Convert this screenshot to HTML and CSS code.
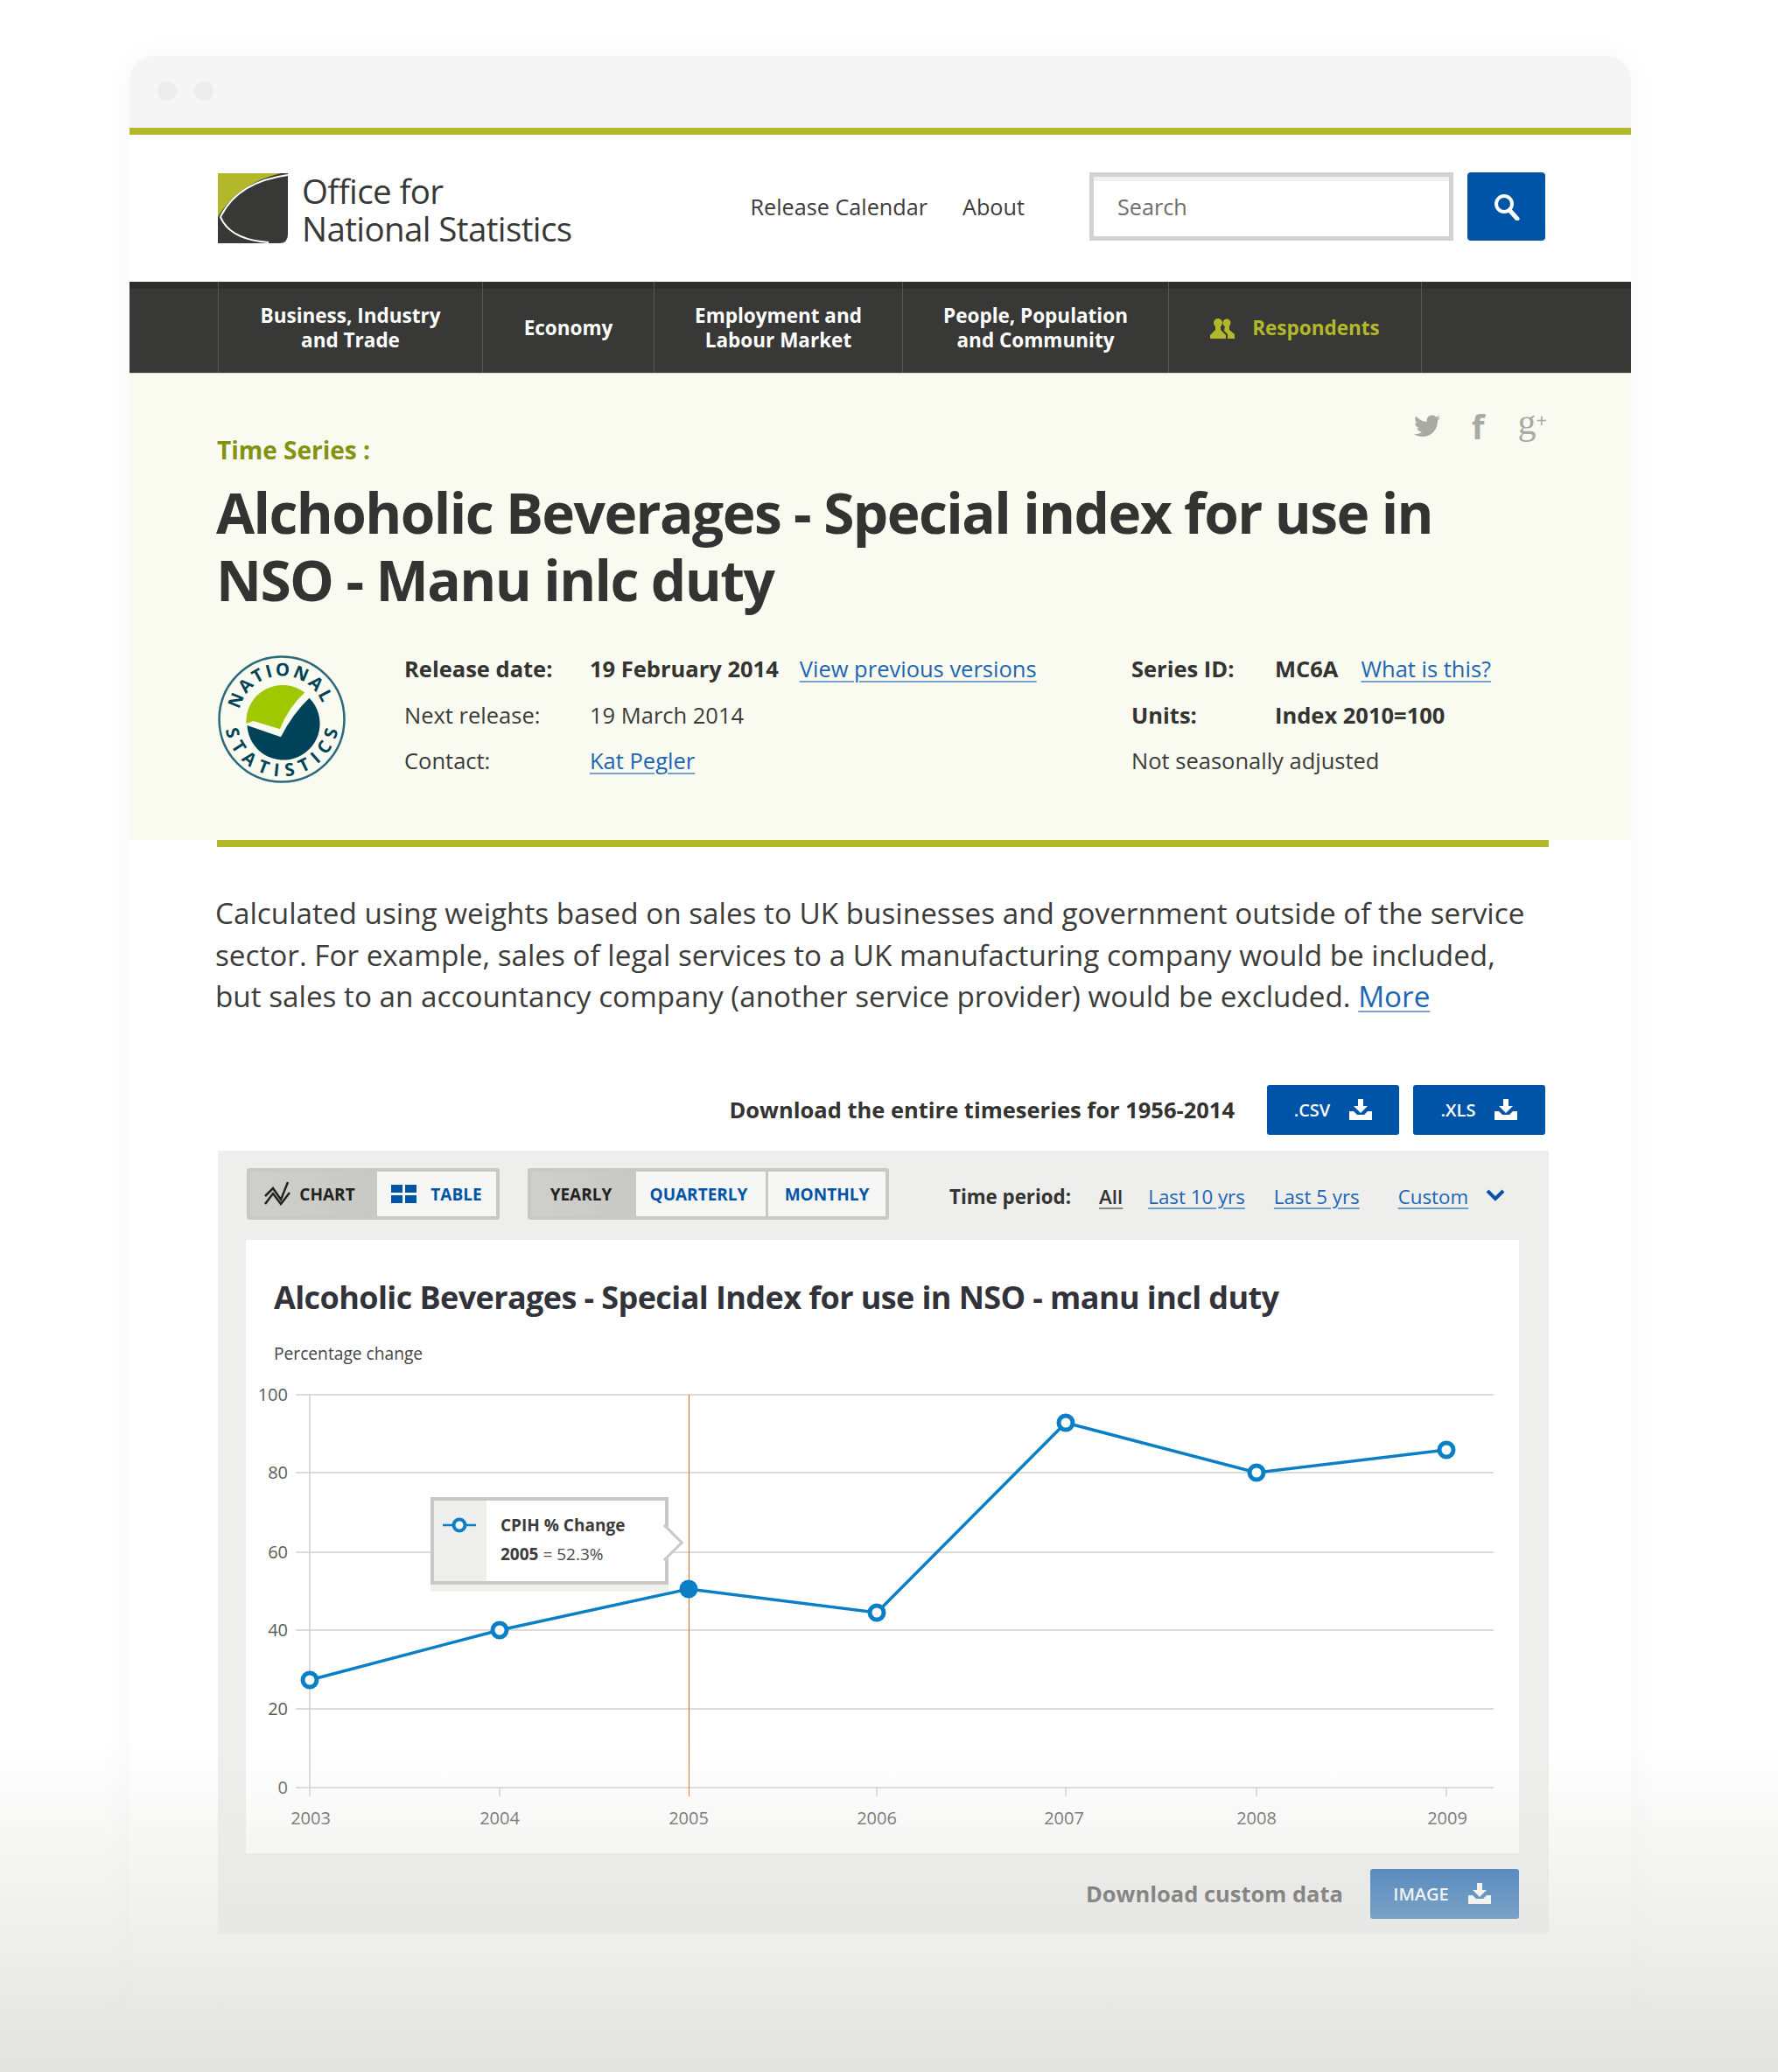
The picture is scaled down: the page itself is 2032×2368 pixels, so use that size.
FILE: index.html
```html
<!DOCTYPE html>
<html lang="en">

<head>
    <meta charset="UTF-8">
    <title>Alchoholic Beverages - Office for National Statistics</title>
    <link rel="stylesheet" href="styles.css">
</head>

<body>
    <div class="window">
        <div class="chrome">
            <span class="dot"></span>
            <span class="dot"></span>
        </div>

        <header class="masthead">
            <a class="brand" href="#">
                <svg class="brand-mark" viewBox="0 0 80 80" width="80" height="80">
                    <path d="M0 0H80V70Q80 80 70 80H0Z" fill="#383836" />
                    <path d="M0 0H72Q22 12 0 50Z" fill="#b3b82b" />
                    <path d="M80 2Q22 10 3 50Q14 76 58 79" fill="none" stroke="#fff" stroke-width="2" />
                </svg>
                <span class="brand-name">Office for<br>National Statistics</span>
            </a>
            <nav class="top-links">
                <a href="#">Release Calendar</a>
                <a href="#">About</a>
            </nav>
            <div class="search">
                <div class="search-box">Search</div>
                <button class="search-btn">
                    <svg viewBox="0 0 32 32" width="32" height="32">
                        <circle cx="13" cy="13" r="9" fill="none" stroke="#fff" stroke-width="4" />
                        <path d="M19 20L28 30" stroke="#fff" stroke-width="5" stroke-linecap="round" />
                    </svg>
                </button>
            </div>
        </header>

        <nav class="main-nav">
            <a class="nav-item nav-business" href="#">Business, Industry<br>and Trade</a>
            <a class="nav-item nav-economy" href="#">Economy</a>
            <a class="nav-item nav-employment" href="#">Employment and<br>Labour Market</a>
            <a class="nav-item nav-people" href="#">People, Population<br>and Community</a>
            <a class="nav-item nav-respondents" href="#">
                <svg viewBox="0 0 28 24" width="28" height="24">
                    <circle cx="9" cy="6" r="5" fill="#b3b82b" />
                    <path d="M0 24V20L6 14V10H12V14L18 20V24Z" fill="#b3b82b" />
                    <circle cx="19" cy="6" r="4.5" fill="#b3b82b" />
                    <path d="M17 10H22V14L28 19V24H20V19L16 15Z" fill="#b3b82b" />
                </svg>
                Respondents
            </a>
        </nav>

        <section class="summary">
            <div class="social">
                <svg viewBox="0 0 30 26" width="30" height="26">
                    <path d="M30 3.5c-1.100.5-2.300.8-3.500 1 1.300-.8 2.200-2 2.700-3.400-1.200.7-2.500 1.200-3.900 1.500C24.200 1.300 22.600.5 20.800.5c-3.400 0-6.200 2.800-6.200 6.200 0 .5.100 1 .2 1.400C9.700 7.800 5.200 5.400 2.100 1.600c-.5.900-.8 2-.8 3.100 0 2.100 1.100 4 2.700 5.100-1 0-2-.3-2.800-.8v.1c0 3 2.100 5.500 4.900 6.100-.5.100-1 .2-1.600.2-.4 0-.8 0-1.200-.1.800 2.500 3.100 4.300 5.800 4.300-2.100 1.700-4.800 2.700-7.700 2.700-.5 0-1 0-1.500-.1 2.800 1.800 6 2.800 9.500 2.800 11.400 0 17.600-9.400 17.600-17.600v-.8c1.200-.9 2.300-2 3-3.100z" fill="#a9aaa4" />
                </svg>
                <span class="social-f">f</span>
                <span class="social-g">g<small>+</small></span>
            </div>
            <p class="eyebrow">Time Series :</p>
            <h1 class="page-title">Alchoholic Beverages - Special index for use in NSO - Manu inlc duty</h1>
            <div class="meta">
                <svg class="roundel" viewBox="0 0 144 144" width="146" height="146">
                    <defs>
                        <path id="arcTop" d="M23 72A49 49 0 0 1 121 72" />
                        <path id="arcBottom" d="M7.500 72A64.500 64.500 0 0 0 136.500 72" />
                    </defs>
                    <circle cx="72" cy="72" r="70.500" fill="none" stroke="#2b6a78" stroke-width="2.500" />
                    <path d="M32 77A41 41 0 0 1 98 42Q80 58 70 83L40 74Z" fill="#a0c800" />
                    <path d="M33 79A41 41 0 1 0 103 48Q84 66 71 92Z" fill="#004358" />
                    <text class="roundel-text"><textPath href="#arcTop" startOffset="11" textLength="124" lengthAdjust="spacing">NATIONAL</textPath></text>
                    <text class="roundel-text"><textPath href="#arcBottom" startOffset="12" textLength="178" lengthAdjust="spacing">STATISTICS</textPath></text>
                </svg>
                <div class="meta-grid meta-release">
                    <strong>Release date:</strong>
                    <span><strong>19 February 2014</strong><a class="version-link" href="#">View previous versions</a></span>
                    <span>Next release:</span>
                    <span>19 March 2014</span>
                    <span>Contact:</span>
                    <span><a href="#">Kat Pegler</a></span>
                </div>
                <div class="meta-grid meta-series">
                    <strong>Series ID:</strong>
                    <span><strong>MC6A</strong><a class="what-link" href="#">What is this?</a></span>
                    <strong>Units:</strong>
                    <strong>Index 2010=100</strong>
                    <span class="meta-wide">Not seasonally adjusted</span>
                </div>
            </div>
        </section>

        <main class="content">
            <div class="rule"></div>
            <p class="intro">Calculated using weights based on sales to UK businesses and government outside of the service sector. For example, sales of legal services to a UK manufacturing company would be included, but sales to an accountancy company (another service provider) would be excluded. <a href="#">More</a></p>

            <div class="download-row">
                <span class="download-label">Download the entire timeseries for 1956-2014</span>
                <a class="btn-blue" href="#">.CSV
                    <svg class="dl-icon" viewBox="0 0 26 24" width="26" height="24">
                        <path d="M10 0H16V8H21L13 16L5 8H10Z" fill="#fff" />
                        <path d="M0 14H5L9 18H17L21 14H26V24H0Z" fill="#fff" />
                    </svg>
                </a>
                <a class="btn-blue" href="#">.XLS
                    <svg class="dl-icon" viewBox="0 0 26 24" width="26" height="24">
                        <path d="M10 0H16V8H21L13 16L5 8H10Z" fill="#fff" />
                        <path d="M0 14H5L9 18H17L21 14H26V24H0Z" fill="#fff" />
                    </svg>
                </a>
            </div>

            <div class="panel">
                <div class="controls">
                    <div class="toggle toggle-view">
                        <span class="toggle-item active item-chart">
                            <svg viewBox="0 0 30 28" width="30" height="28">
                                <path d="M1 17L10 8L19 21L27 1" fill="none" stroke="#222" stroke-width="2.500" />
                                <path d="M1 26L10 14L19 26L29 13" fill="none" stroke="#222" stroke-width="2.500" />
                            </svg>
                            CHART
                        </span>
                        <span class="toggle-item item-table">
                            <svg viewBox="0 0 29 21" width="29" height="21">
                                <path d="M0 0H13V9H0ZM16 0H29V9H16ZM0 12H13V21H0ZM16 12H29V21H16Z" fill="#0054a8" />
                            </svg>
                            TABLE
                        </span>
                    </div>
                    <div class="toggle toggle-freq">
                        <span class="toggle-item active item-yearly">YEARLY</span>
                        <span class="toggle-item item-quarterly">QUARTERLY</span>
                        <span class="toggle-item item-monthly">MONTHLY</span>
                    </div>
                    <div class="period">
                        <strong>Time period:</strong>
                        <a class="period-all" href="#">All</a>
                        <a class="period-ten" href="#">Last 10 yrs</a>
                        <a class="period-five" href="#">Last 5 yrs</a>
                        <a class="period-custom" href="#">Custom</a>
                        <svg class="chevron" viewBox="0 0 22 14" width="22" height="14">
                            <path d="M2 2L11 11L20 2" fill="none" stroke="#0054a8" stroke-width="4" />
                        </svg>
                    </div>
                </div>

                <div class="card">
                    <h2 class="chart-title">Alcoholic Beverages - Special Index for use in NSO - manu incl duty</h2>
                    <p class="chart-unit">Percentage change</p>
                    <div class="chart">
                        <svg viewBox="281 1570 1455 548" width="1455" height="548">
                            <g class="grid">
                                <line x1="338" y1="1593" x2="1707" y2="1593" />
                                <line x1="338" y1="1682" x2="1707" y2="1682" />
                                <line x1="338" y1="1773" x2="1707" y2="1773" />
                                <line x1="338" y1="1862" x2="1707" y2="1862" />
                                <line x1="338" y1="1952" x2="1707" y2="1952" />
                                <line x1="338" y1="2042" x2="1707" y2="2042" />
                                <line x1="354" y1="1593" x2="354" y2="2052" />
                                <line x1="571" y1="2042" x2="571" y2="2052" />
                                <line x1="1002" y1="2042" x2="1002" y2="2052" />
                                <line x1="1218" y1="2042" x2="1218" y2="2052" />
                                <line x1="1436" y1="2042" x2="1436" y2="2052" />
                                <line x1="1653" y1="2042" x2="1653" y2="2052" />
                            </g>
                            <line x1="787.5" y1="1593" x2="787.5" y2="2052" stroke="#e6642a" stroke-width="1" />
                            <g class="axis-y">
                                <text x="329" y="1600">100</text>
                                <text x="329" y="1689">80</text>
                                <text x="329" y="1780">60</text>
                                <text x="329" y="1869">40</text>
                                <text x="329" y="1959">20</text>
                                <text x="329" y="2049">0</text>
                            </g>
                            <g class="axis-x">
                                <text x="355" y="2084">2003</text>
                                <text x="571" y="2084">2004</text>
                                <text x="787" y="2084">2005</text>
                                <text x="1002" y="2084">2006</text>
                                <text x="1216" y="2084">2007</text>
                                <text x="1436" y="2084">2008</text>
                                <text x="1654" y="2084">2009</text>
                            </g>
                            <polyline class="series" points="354,1919 571,1862 787,1815 1002,1842 1218,1625 1436,1682 1653,1656" />
                            <g class="marker">
                                <circle cx="354" cy="1919" r="8" />
                                <circle cx="571" cy="1862" r="8" />
                                <circle cx="1002" cy="1842" r="8" />
                                <circle cx="1218" cy="1625" r="8" />
                                <circle cx="1436" cy="1682" r="8" />
                                <circle cx="1653" cy="1656" r="8" />
                            </g>
                            <circle cx="787" cy="1815" r="10.500" fill="#0a7fc6" />
                        </svg>
                        <div class="tip">
                            <div class="tip-key">
                                <svg viewBox="0 0 38 20" width="38" height="20">
                                    <line x1="0" y1="10" x2="38" y2="10" stroke="#0a7fc6" stroke-width="2.500" />
                                    <circle cx="19" cy="10" r="6.500" fill="#fff" stroke="#0a7fc6" stroke-width="4" />
                                </svg>
                            </div>
                            <div class="tip-body">
                                <strong>CPIH % Change</strong>
                                <span><strong>2005</strong> = 52.3%</span>
                            </div>
                        </div>
                    </div>
                </div>

                <div class="panel-foot">
                    <strong class="foot-label">Download custom data</strong>
                    <a class="btn-blue btn-image" href="#">IMAGE
                        <svg class="dl-icon" viewBox="0 0 26 24" width="26" height="24">
                            <path d="M10 0H16V8H21L13 16L5 8H10Z" fill="#fff" />
                            <path d="M0 14H5L9 18H17L21 14H26V24H0Z" fill="#fff" />
                        </svg>
                    </a>
                </div>
            </div>
        </main>
    </div>
    <div class="fade"></div>
</body>

</html>
```

FILE: styles.css
```css
* {
    box-sizing: border-box;
}

html,
body {
    margin: 0;
    height: 2368px;
    overflow: hidden;
}

body {
    position: relative;
    background: #fff;
    font-family: "Open Sans", "Liberation Sans", sans-serif;
    color: #3c3c3a;
    padding: 64px 168px 0 148px;
}

a {
    color: #1c66b4;
    text-decoration-color: rgba(28, 102, 180, 0.6);
    text-decoration-thickness: 2px;
    text-underline-offset: 4px;
}

.window {
    width: 1716px;
    height: 2304px;
    background: #fff;
    border-radius: 28px 28px 0 0;
    box-shadow: 0 0 40px rgba(0, 0, 0, 0.035);
}

.chrome {
    height: 90px;
    display: flex;
    gap: 20px;
    padding: 29px 32px 0;
    background: #f5f5f5;
    border-radius: 28px 28px 0 0;
    border-bottom: 8px solid #b3b82b;
}

.dot {
    width: 22px;
    height: 22px;
    border-radius: 50%;
    background: #ececec;
}

.masthead {
    height: 168px;
    display: flex;
    align-items: center;
    padding: 0 98px 4px 101px;
}

.brand {
    display: flex;
    align-items: center;
    gap: 16px;
    margin-top: 4px;
    color: #383836;
    text-decoration: none;
}

.brand-name {
    font-size: 38.500px;
    line-height: 43px;
    letter-spacing: -0.6px;
    margin-top: 4px;
}

.top-links {
    display: flex;
    gap: 40px;
    margin-left: 204px;
    font-size: 25.200px;
}

.top-links a {
    color: #3c3c3a;
    text-decoration: none;
}

.search {
    display: flex;
    gap: 16px;
    margin-left: auto;
}

.search-box {
    width: 416px;
    height: 78px;
    padding: 0 27px;
    border: 5px solid #d2d2d0;
    box-shadow: inset 0 5px 0 #f0f0f0;
    font-size: 25.200px;
    line-height: 68px;
    color: #6e6e6c;
}

.search-btn {
    width: 89px;
    height: 78px;
    border: 0;
    border-radius: 4px;
    background: #0054a8;
    display: flex;
    align-items: center;
    justify-content: center;
}

.main-nav {
    height: 104px;
    display: flex;
    padding-left: 101px;
    background: linear-gradient(#2e2e2c 8px, #383836 8px);
}

.nav-item {
    display: flex;
    align-items: center;
    justify-content: center;
    padding-top: 2px;
    text-align: center;
    border-left: 1px solid #555553;
    font-size: 22.500px;
    line-height: 28.500px;
    font-weight: 700;
    color: #fff;
    text-decoration: none;
}

.nav-business {
    width: 302px;
}

.nav-economy {
    width: 196px;
}

.nav-employment {
    width: 284px;
}

.nav-people {
    width: 304px;
}

.nav-respondents {
    width: 290px;
    gap: 20px;
    color: #b3b82b;
    border-right: 1px solid #555553;
}

.summary {
    position: relative;
    height: 534px;
    padding: 67px 98px 0 100px;
    background: #f9faf0;
    border-top: 1px solid #d8d8d4;
}

.social {
    position: absolute;
    top: 40px;
    right: 96px;
    display: flex;
    align-items: center;
    gap: 38px;
    height: 40px;
    color: #a9aaa4;
}

.social-f {
    font-size: 38px;
    font-weight: 700;
    margin-left: -2px;
}

.social-g {
    font-family: "Liberation Serif", serif;
    font-size: 42px;
    margin-top: -10px;
}

.social-g small {
    font-family: "Open Sans", sans-serif;
    font-size: 22px;
    vertical-align: 8px;
}

.eyebrow {
    margin: 0;
    font-size: 28px;
    line-height: 40px;
    font-weight: 700;
    color: #83920f;
}

.page-title {
    margin: 13px 0 0 -1px;
    font-size: 64px;
    line-height: 77px;
    font-weight: 700;
    letter-spacing: -1.600px;
    color: #333331;
}

.meta {
    display: flex;
    align-items: flex-start;
    margin-top: 49px;
    margin-left: 2px;
}

.roundel {
    flex: none;
    margin: -1px 0 0 -1px;
}

.roundel-text {
    font-size: 20px;
    font-weight: 700;
    fill: #004358;
}

.meta-grid {
    display: grid;
    font-size: 25.500px;
    line-height: 52.500px;
    margin-top: -12px;
}

.meta-grid strong {
    font-weight: 700;
    color: #333331;
}

.meta-release {
    grid-template-columns: 212px auto;
    width: 831px;
    margin-left: 67px;
    align-content: start;
}

.meta-series {
    grid-template-columns: 164px auto;
    align-content: start;
}

.meta-wide {
    grid-column: 1 / 3;
}

.version-link {
    margin-left: 24px;
}

.what-link {
    margin-left: 26px;
}

.content {
    padding: 0 94px 0 100px;
}

.rule {
    height: 8px;
    background: #b3b82b;
}

.intro {
    width: 1512px;
    margin: 52px 0 0 -2px;
    font-size: 33.250px;
    line-height: 47.500px;
}

.download-row {
    display: flex;
    align-items: center;
    justify-content: flex-end;
    gap: 16px;
    margin: 77px 4px 0 0;
}

.download-label {
    margin-right: 21px;
    font-size: 25.500px;
    font-weight: 700;
    color: #333331;
}

.btn-blue {
    width: 151px;
    height: 57px;
    display: flex;
    align-items: center;
    justify-content: center;
    gap: 22px;
    border-radius: 3px;
    background: #0054a8;
    color: #fff;
    font-size: 20px;
    font-weight: 600;
    text-decoration: none;
}

.panel {
    margin: 18px 0 0 1px;
    height: 895px;
    background: #eeeeed;
    padding: 20px 34px 0 32px;
}

.controls {
    display: flex;
    align-items: flex-start;
    gap: 32px;
    height: 82px;
    padding-left: 1px;
}

.toggle {
    display: flex;
    height: 59px;
    border: 4px solid #c8c8c4;
    border-radius: 3px;
    background: #c8c8c4;
    gap: 3px;
}

.toggle-item {
    display: flex;
    align-items: center;
    justify-content: center;
    gap: 12px;
    padding-top: 2px;
    background: #f6f6f5;
    color: #0054a8;
    font-size: 19px;
    font-weight: 700;
}

.toggle-item.active {
    background: linear-gradient(90deg, #cfcfcb, #c8c8c4);
    color: #222;
}

.item-chart {
    width: 142px;
    padding-right: 6px;
    gap: 10px;
}

.item-chart svg {
    margin-top: -2px;
}

.item-table {
    width: 136px;
    gap: 16px;
}

.item-table svg {
    margin-top: -2px;
}

.item-yearly {
    width: 117px;
    padding-right: 3px;
}

.item-quarterly {
    width: 148px;
    padding-right: 5px;
}

.item-monthly {
    width: 134px;
}

.period {
    display: flex;
    align-items: center;
    height: 66px;
    margin-left: 37px;
    font-size: 22.300px;
}

.period strong {
    margin-right: 32px;
    color: #333331;
}

.period .period-all {
    color: #333331;
    text-decoration-color: #888;
    font-weight: 600;
    margin-right: 29px;
}

.period-ten {
    margin-right: 33px;
}

.period-five {
    margin-right: 44px;
}

.period-custom {
    margin-right: 20px;
}

.chevron {
    margin-top: -4px;
}

.card {
    height: 701px;
    background: #fff;
    overflow: hidden;
}

.chart-title {
    margin: 42px 0 0 32px;
    font-size: 36px;
    line-height: 48px;
    font-weight: 700;
    letter-spacing: -0.600px;
    color: #32323a;
}

.chart-unit {
    margin: 25px 0 9px 32px;
    font-size: 19.200px;
    line-height: 30px;
    color: #444;
}

.chart {
    position: relative;
    height: 548px;
}

.chart svg {
    display: block;
}

.grid line {
    stroke: #cfcfcb;
    stroke-width: 1.500;
}

.axis-y text,
.axis-x text {
    font-size: 20px;
    fill: #5c5c5a;
}

.axis-y text {
    text-anchor: end;
}

.axis-x text {
    text-anchor: middle;
}

.series {
    fill: none;
    stroke: #0a7fc6;
    stroke-width: 3.500;
}

.marker circle {
    fill: #fff;
    stroke: #0a7fc6;
    stroke-width: 5;
}

.tip {
    position: absolute;
    left: 211px;
    top: 140px;
    width: 272px;
    height: 100px;
    display: flex;
    background: #fff;
    border: 4px solid #c8c8c4;
    box-shadow: 0 8px 0 #f0f0ee;
}

.tip::after {
    content: "";
    position: absolute;
    right: -15px;
    top: 33px;
    width: 27px;
    height: 27px;
    background: #fff;
    border-top: 3px solid #c8c8c4;
    border-right: 3px solid #c8c8c4;
    transform: rotate(45deg);
}

.tip-key {
    width: 60px;
    padding: 18px 0 0 10px;
    background: #eeeeed;
}

.tip-body {
    position: relative;
    z-index: 1;
    display: flex;
    flex-direction: column;
    padding: 12px 0 0 16px;
    font-size: 19px;
    line-height: 33px;
    color: #4a4a48;
}

.tip-body strong {
    color: #3c3c3a;
}

.panel-foot {
    display: flex;
    align-items: center;
    justify-content: flex-end;
    gap: 31px;
    margin-top: 18px;
}

.foot-label {
    font-size: 25.500px;
    color: #333331;
}

.btn-image {
    width: 170px;
    padding-right: 6px;
}

.fade {
    position: absolute;
    left: 0;
    right: 0;
    bottom: 0;
    height: 380px;
    pointer-events: none;
    background: linear-gradient(rgba(227, 227, 225, 0), rgb(227, 227, 225));
}
```
